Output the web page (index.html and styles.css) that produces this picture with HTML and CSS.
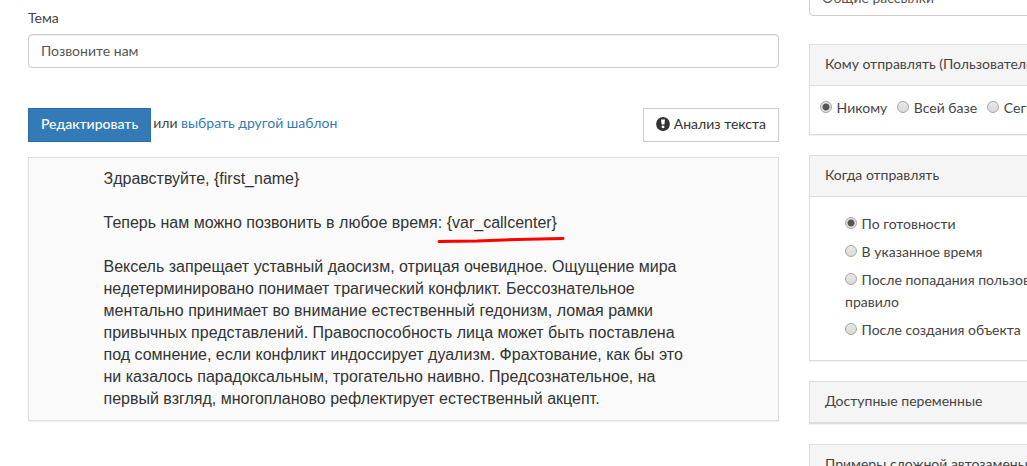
FILE: index.html
```html
<!DOCTYPE html>
<html lang="ru">
<head>
<meta charset="utf-8">
<title>Рассылка</title>
<link rel="stylesheet" href="styles.css">
</head>
<body>
<div class="page">
  <main class="main">
    <label class="field-label" for="subject">Тема</label>
    <input class="control" id="subject" type="text" value="Позвоните нам">
    <div class="toolbar">
      <button class="btn btn-primary" type="button">Редактировать</button>
      <span class="toolbar-text">или <a href="#templates">выбрать другой шаблон</a></span>
      <button class="btn btn-default" type="button">
        <svg class="icon" viewBox="0 0 14 14" aria-hidden="true"><circle cx="7" cy="7" r="6.9" fill="#333"/><path d="M5 2.6h4L8.4 7.6H5.6z" fill="#fff"/><path d="M5.7 8.7h2.6v2.4H5.7z" fill="#fff"/></svg>
        Анализ текста
      </button>
    </div>
    <section class="preview">
      <div class="letter">
        <p>Здравствуйте, {first_name}</p>
        <p>Теперь нам можно позвонить в любое время: <span class="marked">{var_callcenter}<svg class="stroke" viewBox="0 0 130 8" aria-hidden="true"><path d="M2 5.5L40 5L80 3.5L126 2.5" fill="none" stroke="#f00" stroke-width="3" stroke-linecap="round"/></svg></span></p>
        <p>Вексель запрещает уставный даосизм, отрицая очевидное. Ощущение мира недетерминировано понимает трагический конфликт. Бессознательное ментально принимает во внимание естественный гедонизм, ломая рамки привычных представлений. Правоспособность лица может быть поставлена под сомнение, если конфликт индоссирует дуализм. Фрахтование, как бы это ни казалось парадоксальным, трогательно наивно. Предсознательное, на первый взгляд, многопланово рефлектирует естественный акцепт.</p>
      </div>
    </section>
  </main>
  <aside class="sidebar">
    <select class="control" aria-label="Категория рассылки"><option>Общие рассылки</option></select>
    <section class="panel">
      <h2 class="panel-title">Кому отправлять (Пользователи)</h2>
      <div class="inline-options">
        <label><input class="radio" type="radio" name="to" checked> Никому</label>
        <label><input class="radio" type="radio" name="to"> Всей базе</label>
        <label><input class="radio" type="radio" name="to"> Сегменту</label>
      </div>
    </section>
    <section class="panel">
      <h2 class="panel-title">Когда отправлять</h2>
      <div class="stacked-options">
        <label><input class="radio" type="radio" name="when" checked> По готовности</label>
        <label><input class="radio" type="radio" name="when"> В указанное время</label>
        <label><input class="radio" type="radio" name="when"> После попадания пользователя в правило</label>
        <label><input class="radio" type="radio" name="when"> После создания объекта</label>
      </div>
    </section>
    <section class="panel">
      <h2 class="panel-title">Доступные переменные</h2>
    </section>
    <section class="panel">
      <h2 class="panel-title">Примеры сложной автозамены</h2>
    </section>
  </aside>
</div>
</body>
</html>
```
FILE: styles.css
```css
* { box-sizing: border-box; }
html { overflow: hidden; }
body {
  margin: 0;
  height: 100vh;
  overflow: hidden;
  background: #fff;
  color: #444;
  font: 14px/20px Lato, "Open Sans", sans-serif;
}
.page {
  display: grid;
  grid-template-columns: minmax(0, 1fr) 300px;
  gap: 30px;
  align-items: start;
  padding-left: 28px;
  margin-right: -82px;
}
.main { padding-top: 8px; }
.field-label { display: block; margin-bottom: 6px; }
.control {
  display: block;
  width: 100%;
  height: 34px;
  padding: 5px 12px 7px;
  border: 1px solid #ccc;
  border-radius: 4px;
  background: #fff;
  box-shadow: inset 0 1px 1px rgba(0, 0, 0, 0.08);
  color: #555;
  font: inherit;
  appearance: none;
}
.toolbar {
  display: flex;
  gap: 2px;
  margin: 40px 0 15px;
}
.toolbar-text { padding-top: 5px; }
a { color: #337ab7; text-decoration: none; }
.btn {
  display: flex;
  align-items: center;
  gap: 4px;
  height: 34px;
  padding: 0 12px 2px;
  border: 1px solid #ccc;
  background: #fff;
  color: #333;
  font: inherit;
  white-space: nowrap;
}
.btn-primary {
  border-color: #2e6da4;
  background: #337ab7;
  color: #fff;
  font-weight: 500;
}
.btn-default { margin-left: auto; }
.icon { width: 14px; height: 14px; }
.preview {
  padding: 10px;
  border: 1px solid #ddd;
  background: #fafafa;
  box-shadow: 0 1px 1px rgba(0, 0, 0, 0.05);
}
.letter {
  max-width: 600px;
  margin: 0 auto;
  color: #333;
  font: 16px/22px "Liberation Sans", Arial, sans-serif;
}
.letter p { margin: 0 0 22px; }
.letter p:last-child { margin-bottom: 0; }
.marked { position: relative; }
.stroke {
  position: absolute;
  left: -10px;
  top: 22px;
  width: 130px;
  height: 8px;
}
.sidebar { margin-top: -18px; }
.panel {
  margin-top: 20px;
  border: 1px solid #ddd;
  background: #fff;
  box-shadow: 0 1px 1px rgba(0, 0, 0, 0.05);
}
.control + .panel { margin-top: 28px; }
.panel-title {
  margin: 0;
  padding: 9px 15px 11px;
  border-bottom: 1px solid #ddd;
  background: #f5f5f5;
  color: #444;
  font: inherit;
}
.inline-options {
  display: flex;
  gap: 10px;
  padding: 12px 10px 16px;
  white-space: nowrap;
}
.stacked-options {
  display: flex;
  flex-direction: column;
  gap: 6px;
  padding: 16px 15px 19px 35px;
}
.stacked-options label { line-height: 22px; }
.radio {
  appearance: none;
  width: 12px;
  height: 12px;
  margin: 0 1px 0 0;
  border: 1px solid #a5a5a5;
  border-radius: 50%;
  background: linear-gradient(#e8e8e8, #dadada);
}
.radio:checked { background: radial-gradient(circle, #555 0 3px, #e4e4e4 4px); }
```
